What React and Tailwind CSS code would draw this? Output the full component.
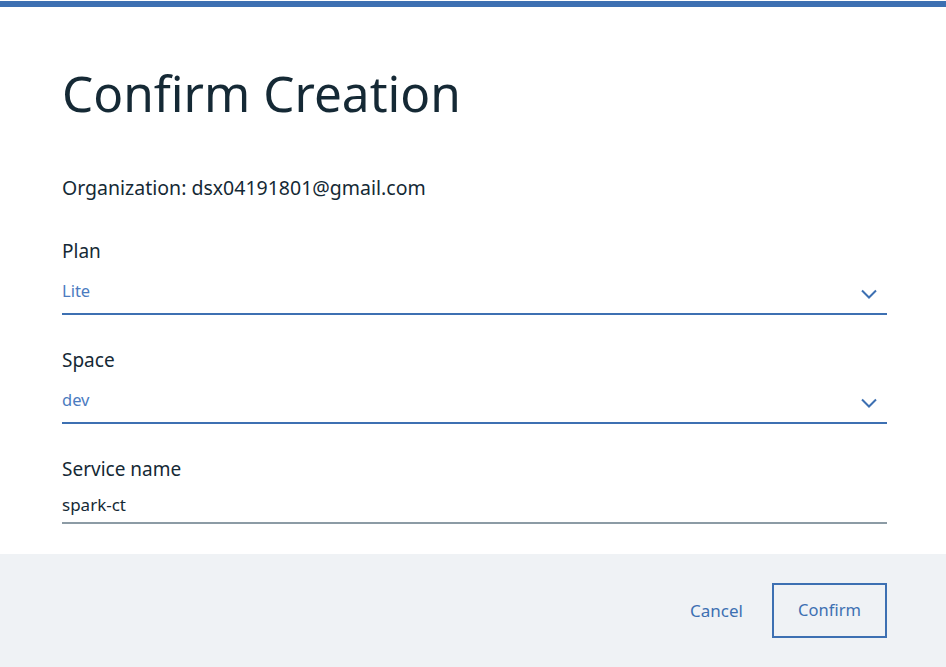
import React from 'react';

function Chevron() {
  return (
    <svg width="16" height="10" viewBox="0 0 16 10" className="text-[#3d70b2] mb-[2px]">
      <path d="M1 1.5 L8 8.5 L15 1.5" fill="none" stroke="currentColor" strokeWidth="2" />
    </svg>
  );
}

function SelectField({ label, value }) {
  return (
    <div className="flex flex-col">
      <span className="text-[19px] leading-[24px] text-[#152935]">{label}</span>
      <div className="mt-[18px] flex items-end justify-between border-b-2 border-[#3d70b2] pb-[12px] pr-[10px]">
        <span className="text-[16.5px] leading-[20px] text-[#4b7bbf]">{value}</span>
        <Chevron />
      </div>
    </div>
  );
}

export default function App() {
  return (
    <div className="w-[946px] h-[667px] bg-white flex flex-col overflow-hidden" style={{ fontFamily: '"Noto Sans", "Open Sans", sans-serif' }}>
      <div className="mt-px h-[6px] bg-[#3d70b2]" />
      <div className="flex-1 flex flex-col pl-[62px] pr-[59px]">
        <h1 className="mt-[56px] text-[49.5px] leading-[60px] text-[#152935] font-normal">Confirm Creation</h1>
        <p className="mt-[53px] text-[19.5px] leading-[24px] text-[#152935]">Organization: dsx04191801@gmail.com</p>
        <div className="mt-[39px] flex flex-col gap-[33px]">
          <SelectField label="Plan" value="Lite" />
          <SelectField label="Space" value="dev" />
          <div className="flex flex-col">
            <span className="text-[19px] leading-[24px] text-[#152935]">Service name</span>
            <div className="mt-[14px] border-b-2 border-[#8c9ba5] pb-[7px]">
              <span className="block text-[17px] leading-[20px] text-[#152935]">spark-ct</span>
            </div>
          </div>
        </div>
      </div>
      <div className="h-[113px] bg-[#eff2f5] flex items-center justify-end pr-[59px]">
        <button className="text-[17px] text-[#3d70b2] mr-[29px]">Cancel</button>
        <button className="w-[115px] h-[55px] border-2 border-[#3d70b2] text-[16.5px] text-[#3d70b2]">Confirm</button>
      </div>
    </div>
  );
}
